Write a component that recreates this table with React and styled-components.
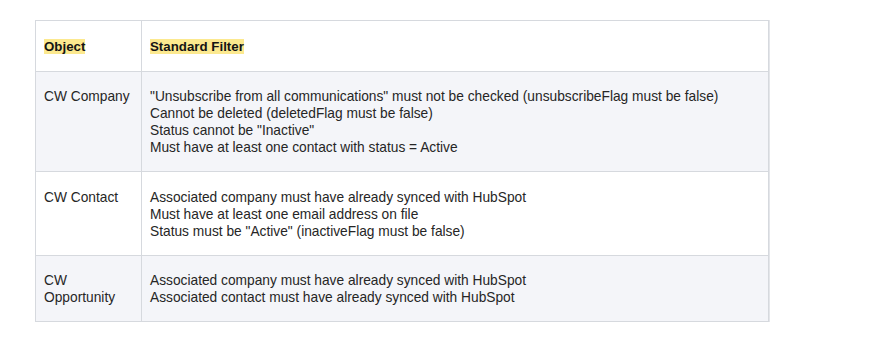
import React from "react";
import styled, { createGlobalStyle } from "styled-components";

const GlobalStyle = createGlobalStyle`
  body {
    margin: 0;
    background: #ffffff;
    font-family: "Liberation Sans", Arial, sans-serif;
  }
`;

const rows = [
  {
    object: "CW Company",
    filters: [
      '"Unsubscribe from all communications" must not be checked (unsubscribeFlag must be false)',
      "Cannot be deleted (deletedFlag must be false)",
      'Status cannot be "Inactive"',
      "Must have at least one contact with status = Active",
    ],
  },
  {
    object: "CW Contact",
    filters: [
      "Associated company must have already synced with HubSpot",
      "Must have at least one email address on file",
      'Status must be "Active" (inactiveFlag must be false)',
    ],
  },
  {
    object: "CW Opportunity",
    filters: [
      "Associated company must have already synced with HubSpot",
      "Associated contact must have already synced with HubSpot",
    ],
  },
];

export default function App() {
  return (
    <>
      <GlobalStyle />
      <Page>
        <Table>
          <thead>
            <tr>
              <HeadCell $first>
                <Mark>Object</Mark>
              </HeadCell>
              <HeadCell>
                <Mark>Standard Filter</Mark>
              </HeadCell>
            </tr>
          </thead>
          <tbody>
            {rows.map((row, i) => (
              <Row key={row.object} $shaded={i % 2 === 0}>
                <Cell $first>{row.object}</Cell>
                <Cell>
                  {row.filters.map((f) => (
                    <Line key={f}>{f}</Line>
                  ))}
                </Cell>
              </Row>
            ))}
          </tbody>
        </Table>
      </Page>
    </>
  );
}

const Page = styled.div`
  padding: 20px 0 0 35px;
`;

const Table = styled.table`
  width: 734px;
  border-collapse: collapse;
  border: 1px solid #d6d9de;
  box-shadow: 1px 0 0 #e4e6ea;
  color: #262626;
  font-size: 13.75px;
  line-height: 17px;
`;

const HeadCell = styled.th`
  width: ${(p) => (p.$first ? "89px" : "auto")};
  padding: 16.5px 8px 16px;
  text-align: left;
  font-weight: 700;
  font-size: 13.3px;
  border: 1px solid #d6d9de;
  background: #ffffff;
`;

const Mark = styled.span`
  background: #fce98f;
  color: #141414;
`;

const Row = styled.tr`
  background: ${(p) => (p.$shaded ? "#f4f5f9" : "#ffffff")};
`;

const Cell = styled.td`
  width: ${(p) => (p.$first ? "89px" : "auto")};
  padding: 16.5px 8px 15px;
  vertical-align: top;
  border: 1px solid #d6d9de;
`;

const Line = styled.div``;
